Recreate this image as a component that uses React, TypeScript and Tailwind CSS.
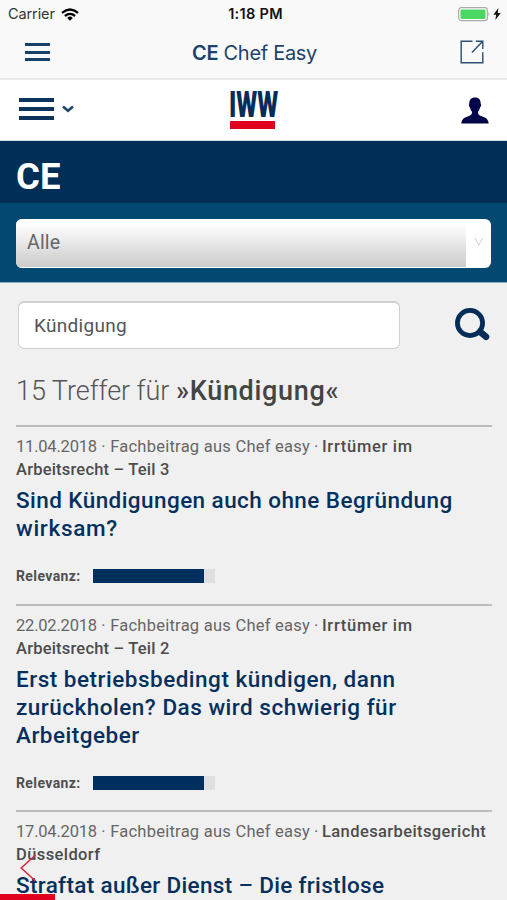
import type { ReactNode } from "react";

type Hit = {
  date: string;
  source: ReactNode;
  title: ReactNode;
};

const hits: Hit[] = [
  {
    date: "11.04.2018",
    source: (
      <>
        <b className="font-medium tracking-[0.7px] text-[#4c4c4c]">Irrtümer im</b>
        <br />
        <b className="font-medium tracking-[0.2px] text-[#4c4c4c]">Arbeitsrecht – Teil 3</b>
      </>
    ),
    title: (
      <>
        <span className="tracking-[0.43px]">Sind Kündigungen auch ohne Begründung</span>
        <br />
        <span className="tracking-[0.7px]">wirksam?</span>
      </>
    ),
  },
  {
    date: "22.02.2018",
    source: (
      <>
        <b className="font-medium tracking-[0.7px] text-[#4c4c4c]">Irrtümer im</b>
        <br />
        <b className="font-medium tracking-[0.2px] text-[#4c4c4c]">Arbeitsrecht – Teil 2</b>
      </>
    ),
    title: (
      <span className="tracking-[0.5px]">
        Erst betriebsbedingt kündigen, dann
        <br />
        zurückholen? Das wird schwierig für
        <br />
        Arbeitgeber
      </span>
    ),
  },
  {
    date: "17.04.2018",
    source: (
      <>
        <b className="font-medium tracking-[0.4px] text-[#4c4c4c]">Landesarbeitsgericht</b>
        <br />
        <b className="font-medium tracking-[0.4px] text-[#4c4c4c]">Düsseldorf</b>
      </>
    ),
    title: <span className="tracking-[0.33px]">Straftat außer Dienst – Die fristlose</span>,
  },
];

function StatusBar() {
  return (
    <div className="grid h-7 grid-cols-3 items-center pl-2 pr-1 text-[14.5px] text-[#111]">
      <div className="flex items-center gap-[6px]">
        <span className="tracking-[-0.1px] text-[#333]">Carrier</span>
        <svg width="18" height="13" viewBox="0 0 18 13" fill="none" stroke="#000" strokeWidth="2.3">
          <path d="M1 4.8 Q9 -1.8 17 4.8" />
          <path d="M3.9 8 Q9 3.7 14.1 8" />
          <path d="M6.2 9.9 Q9 7.2 11.8 9.9 L9 12.8Z" fill="#000" stroke="none" />
        </svg>
      </div>
      <div className="text-center font-semibold tracking-[0.3px]">1:18 PM</div>
      <div className="flex items-center justify-end gap-[2px]">
        <svg width="33" height="15" viewBox="0 0 33 15">
          <rect x="0.7" y="0.7" width="28.6" height="13" rx="2.6" fill="#fff" stroke="#a9aba8" strokeWidth="1.2" />
          <rect x="2.5" y="2.4" width="25" height="9.6" rx="1" fill="#4cd662" />
          <path d="M30.5 5 Q32.4 7.2 30.5 9.4Z" fill="#a9aba8" />
        </svg>
        <svg className="mr-[2px]" width="8" height="12" viewBox="0 0 8 12">
          <path d="M5.4 0 L0.4 6.7 H3.2 L2.3 12 L7.8 4.9 H4.8Z" fill="#111" />
        </svg>
      </div>
    </div>
  );
}

function Relevance() {
  return (
    <div className="flex h-[14px] items-center">
      <span className="w-[77px] text-[14px] font-bold leading-[14px] tracking-[0.4px] text-[#4f4f4f]">Relevanz:</span>
      <div className="h-[14px] w-[122px] bg-[#dfdfdf]">
        <div className="h-full w-[111px] bg-[#002f5d]" />
      </div>
    </div>
  );
}

export default function App() {
  return (
    <div className="relative flex h-[900px] w-[507px] flex-col overflow-hidden bg-[#f0f0f0] font-[Roboto,sans-serif]">
      <div className="flex h-[80px] shrink-0 flex-col border-b-2 border-[#e9e9e9] bg-[#f9f9f9] font-[Inter,sans-serif]">
        <StatusBar />
        <div className="grid h-[48px] grid-cols-3 items-center pl-[25px] pr-[23px]">
          <div className="flex w-[25px] flex-col gap-[4.5px]">
            <i className="h-[3px] bg-[#174168]" />
            <i className="h-[3px] bg-[#174168]" />
            <i className="h-[3px] bg-[#174168]" />
          </div>
          <div className="whitespace-nowrap pt-[1px] text-center text-[20px] tracking-[-0.3px] text-[#1c4368]">
            <b className="font-semibold">CE</b> Chef Easy
          </div>
          <svg className="justify-self-end" width="24" height="24" viewBox="0 0 24 24" fill="none" stroke="#2a4f73" strokeWidth="1.4">
            <path d="M12.5 1.2 H1.2 V22.8 H22.8 V12.2 M15.8 1.2 H22.8 V9 M22.4 1.6 L12 12.4" />
          </svg>
        </div>
      </div>

      <header className="grid h-[61px] shrink-0 grid-cols-3 items-center border-b border-[#d3dce3] bg-white pl-[19px] pr-[18px]">
        <div className="flex items-center gap-[8px] pb-[3px]">
          <div className="flex w-[35px] flex-col gap-[5px]">
            <i className="h-1 bg-[#0c335b]" />
            <i className="h-1 bg-[#0c335b]" />
            <i className="h-1 bg-[#0c335b]" />
          </div>
          <svg width="12" height="8" viewBox="0 0 12 8" fill="none" stroke="#1e466b" strokeWidth="2.6">
            <path d="M1 1.5 L6 5.8 L11 1.5" />
          </svg>
        </div>
        <div className="flex w-[48px] flex-col justify-self-center pb-[1px]">
          <div className="-ml-px h-[28px] w-[76px] origin-left scale-x-[0.67] text-[36px] font-black leading-[28px] text-[#062d59]">IWW</div>
          <div className="mt-[2px] h-[8px] w-[45px] bg-[#e2001f]" />
        </div>
        <svg className="justify-self-end" width="28" height="27" viewBox="0 0 28 27" fill="#03044a">
          <path d="M14 0.5 C10 .5 8 3.2 8.3 7 C7.5 7.2 8 10 9 10.5 C9.3 12.5 10 13.8 11 14.8 C11.2 17.8 9.7 18.5 6.8 19.5 C3 20.8 .8 22 .3 26.5 H27.7 C27.2 22 25 20.8 21.2 19.5 C18.3 18.5 16.8 17.8 17 14.8 C18 13.8 18.7 12.5 19 10.5 C20 10 20.5 7.2 19.7 7 C20 3.2 18 .5 14 .5Z" />
        </svg>
      </header>

      <div className="flex h-[62px] shrink-0 items-center bg-[#012e57] pl-4 pt-[10px]">
        <h1 className="text-[36.5px] font-bold leading-none text-white">CE</h1>
      </div>

      <div className="h-[80px] shrink-0 border-b border-[#8fb0c1] bg-[#014970] px-4 pt-[16px]">
        <div className="flex h-[49px] overflow-hidden rounded-[6px] bg-white">
          <div className="flex w-[450px] items-center border-b border-white bg-linear-to-b from-white from-10% to-[#cbcbcb] pl-[11px] text-[19.5px] tracking-[0.2px] text-[#666]">
            Alle
          </div>
          <svg className="ml-[8px] mt-[18px]" width="10" height="10" viewBox="0 0 10 10" fill="none" stroke="#d9dbdc" strokeWidth="1.2">
            <path d="M.8 .8 L4.8 8 L8.8 .8" />
          </svg>
        </div>
      </div>

      <main className="flex flex-col pl-4 pr-[15px]">
        <div className="flex h-[84px] items-center justify-between pl-[2px] pr-[2px]">
          <div className="flex h-[48px] w-[382px] items-center rounded-[6px] border border-t-2 border-[#cfcfcf] bg-white pl-[15px] pt-[1px] text-[19px] tracking-[0.3px] text-[#555]">
            Kündigung
          </div>
          <svg width="37" height="34" viewBox="0 0 37 34" fill="none" stroke="#032d58">
            <circle cx="17" cy="15" r="12.6" strokeWidth="4.8" />
            <path d="M27 23.8 L33 28.8" strokeWidth="6.6" strokeLinecap="round" />
          </svg>
        </div>
        <h2 className="h-[58px] whitespace-nowrap pt-[8px] text-[27px] font-light leading-[32px] tracking-[-0.05px] text-[#555]">
          15 Treffer für <b className="font-medium tracking-[0.7px] text-[#444]">»Kündigung«</b>
        </h2>
        {hits.map((hit) => (
          <article key={hit.date} className="border-t-2 border-[#bcbcbc] pb-[20.5px] pt-[8px]">
            <p className="whitespace-nowrap text-[16.5px] leading-[23px] text-[#666]">
              <span className="inline-block w-[306px] whitespace-pre">
                <span className="tracking-[-0.2px]">{hit.date}</span>
                <span className="tracking-[0.25px]"> · Fachbeitrag aus Chef easy</span>
                <span className="tracking-[-0.1px]"> ·</span>
              </span>
              {hit.source}
            </p>
            <h3 className="mb-[27px] mt-[5px] whitespace-nowrap text-[22.5px] font-medium leading-[28px] text-[#05305d]">
              {hit.title}
            </h3>
            <Relevance />
          </article>
        ))}
      </main>

      <svg className="absolute left-[20px] top-[854px]" width="17" height="28" viewBox="0 0 17 28" fill="none" stroke="#dc2440" strokeWidth="1.5">
        <path d="M15.5 1 L1.2 14 L15.5 27" />
      </svg>
      <div className="absolute bottom-0 left-0 h-[6px] w-[55px] bg-[#e2001f]" />
    </div>
  );
}
